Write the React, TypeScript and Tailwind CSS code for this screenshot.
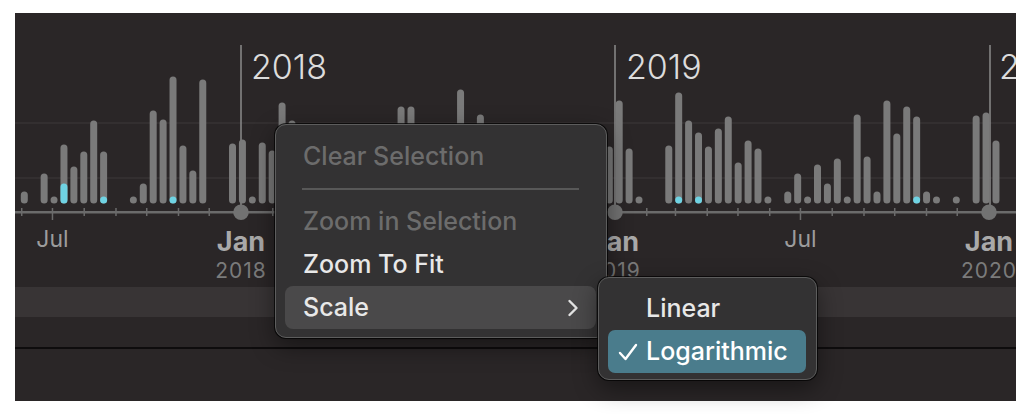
import { ChevronRight } from 'lucide-react'

// px per day on the timeline, Jan 1 2018 sits at x=241
const DAY = 374 / 365
const JAN18 = Date.UTC(2018, 0, 1)
const monthX = (y: number, m: number) => 241 + ((Date.UTC(y, m, 1) - JAN18) / 86400000) * DAY

// [slot, height, cyan] — cyan: 0 none, -1 dot, >0 partial height
const BARS: [number, number, number][] = [
  [0, 12, 0], [2, 30, 0], [3, 7, 0], [4, 59, 20], [5, 37, 0], [6, 52, 0], [7, 83, 0], [8, 52, -1],
  [11, 7, 0], [12, 20, 0], [13, 93, 0], [14, 84, 0], [15, 127, -1], [16, 58, 0], [17, 33, 0], [18, 124, 0],
  [21, 60, 0], [22, 64, 0], [23, 7, 0], [24, 61, 0], [25, 53, 0], [26, 101, 0], [27, 83, 0],
  [28, 40, 0], [29, 62, 0], [30, 7, 0], [31, 25, 0], [32, 70, 0], [33, 48, 0], [34, 55, 0], [35, 30, 0], [36, 7, 0],
  [38, 97, 0], [39, 97, 0], [40, 60, 0], [41, 45, 0], [42, 70, 0], [43, 35, 0], [44, 114, 0], [45, 50, 0],
  [46, 89, 0], [47, 66, 0], [48, 7, 0], [50, 20, 0], [51, 45, 0], [52, 72, 0], [53, 40, 0], [54, 60, 0],
  [55, 7, 0], [56, 52, 0], [57, 30, 0], [58, 70, 0], [59, 57, 0],
  [60, 103, 0], [61, 55, 0], [62, 7, 0], [65, 58, 0], [66, 111, -1], [67, 83, 0], [68, 71, -1], [69, 57, 0],
  [70, 75, 0], [71, 87, 0], [72, 41, 0], [73, 63, 0], [74, 55, 0], [75, 7, 0], [77, 12, 0], [78, 30, 0],
  [79, 7, 0], [80, 39, 0], [81, 20, 0], [82, 45, 0], [83, 7, 0], [84, 89, 0], [85, 47, 0], [86, 12, 0],
  [87, 103, 0], [88, 70, 0], [89, 97, 0], [90, 87, -1], [91, 12, 0], [92, 7, 0], [94, 7, 0],
  [96, 88, 0], [97, 91, 0], [98, 63, 0],
]

const BASE = 203.5
const slotX = (i: number) => 24.3 + i * 9.915

function months() {
  const out: { x: number; major: boolean; jan: boolean }[] = []
  for (let y = 2017; y <= 2020; y++) {
    for (let m = 0; m < 12; m++) {
      const x = monthX(y, m)
      if (x < 10 || x > 1020) continue
      out.push({ x, major: m === 6, jan: m === 0 })
    }
  }
  return out
}

function Chart() {
  const ticks = months()
  return (
    <svg width={1001} height={274} viewBox="15 13 1001 274" className="block">
      <rect x={15} y={122.5} width={1001} height={1} fill="#3d393a" />
      <rect x={15} y={177.5} width={1001} height={1} fill="#3d393a" />

      {[241, 615, 990].map(x => (
        <rect key={x} x={x - 0.75} y={45} width={1.5} height={167} fill="#8a8a8a" />
      ))}

      {BARS.map(([i, h, c]) => {
        const cx = slotX(i)
        return (
          <g key={i}>
            <rect x={cx - 3.5} y={BASE - h} width={7} height={h} rx={3.5} fill="#7a7a7a" />
            {c === -1 && <circle cx={cx} cy={BASE - 3.5} r={3.5} fill="#6fd3e3" />}
            {c > 0 && <rect x={cx - 3.5} y={BASE - c} width={7} height={c} rx={3.5} fill="#6fd3e3" />}
          </g>
        )
      })}

      <rect x={15} y={211} width={1001} height={2.5} fill="#6b6b6b" />
      {ticks.map(t =>
        t.jan
          ? <circle key={t.x} cx={t.x} cy={212.2} r={7.8} fill="#727272" />
          : <rect key={t.x} x={t.x - 0.75} y={208} width={1.5} height={t.major ? 12 : 8} fill="#6b6b6b" />,
      )}
    </svg>
  )
}

const font = { fontFamily: 'Inter, "Noto Sans", sans-serif' }

function JanLabel({ x, year }: { x: number; year: string }) {
  return (
    <div className="absolute w-[80px] text-center leading-none" style={{ left: x - 15 - 40, top: 215 }}>
      <div className="text-[27px] font-bold text-[#a9a9a9]">Jan</div>
      <div className="mt-[5px] text-[21px] text-[#7b7b7b] tracking-[1px]">{year}</div>
    </div>
  )
}

function MenuRow({ label, disabled, active, chevron }: { label: string; disabled?: boolean; active?: boolean; chevron?: boolean }) {
  return (
    <div
      className={`flex h-[43px] items-center justify-between rounded-[8px] pl-[18px] pr-[19px] text-[25px] font-medium ${
        active ? 'bg-[#4a494a]' : ''
      } ${disabled ? 'text-[#6c6c6c]' : 'text-[#e8e8e8]'}`}
    >
      <span>{label}</span>
      {chevron && <ChevronRight size={28} strokeWidth={2.1} className="text-[#e2e2e2] -mr-[10px]" />}
    </div>
  )
}

export default function App() {
  return (
    <div className="relative h-[414px] w-[1032px] overflow-hidden bg-white" style={font}>
      <div className="ml-[15px] mt-[13px] flex h-[388px] w-[1001px] flex-col overflow-hidden bg-[#2a2627]">
        <div className="relative h-[274px] overflow-hidden">
          <Chart />
          {[
            ['2018', 236],
            ['2019', 611],
            ['2020', 984],
          ].map(([t, l]) => (
            <div
              key={t}
              className="absolute text-[34px] font-light leading-none text-[#dcdcdc]"
              style={{ left: Number(l), top: 37 }}
            >
              {t}
            </div>
          ))}
          {/* Jul 2018 sits under the menu, only 2017 and 2019 show */}
          {[52.5, 800.5].map(x => (
            <div
              key={x}
              className="absolute w-[60px] text-center text-[23px] leading-none text-[#9c9c9c]"
              style={{ left: x - 15 - 30, top: 215 }}
            >
              Jul
            </div>
          ))}
          <JanLabel x={241} year="2018" />
          <JanLabel x={615} year="2019" />
          <JanLabel x={989} year="2020" />
        </div>
        <div className="h-[30px] bg-[#383435]" />
        <div className="h-[30px]" />
        <div className="h-[2px] bg-[#0e0c0d]" />
        <div className="flex-1" />
      </div>

      {/* context menu */}
      <div className="absolute left-[275px] top-[124px] h-[214px] w-[332px] rounded-[11px] border border-[#5d5d5d] bg-[#333233] pl-[9px] pr-[10px] pt-[10px] shadow-[0_0_0_1px_rgba(0,0,0,0.7),0_8px_24px_rgba(0,0,0,0.45)]">
        <MenuRow label="Clear Selection" disabled />
        <div className="flex h-[22px] items-center px-[17px]">
          <div className="h-[2px] w-full bg-[#585858]" />
        </div>
        <MenuRow label="Zoom in Selection" disabled />
        <MenuRow label="Zoom To Fit" />
        <MenuRow label="Scale" active chevron />
      </div>

      {/* submenu */}
      <div className="absolute left-[598px] top-[277px] h-[103px] w-[219px] rounded-[11px] border border-[#5d5d5d] bg-[#333233] pl-[9px] pr-[10px] pt-[9px] shadow-[0_0_0_1px_rgba(0,0,0,0.7),0_8px_24px_rgba(0,0,0,0.45)]">
        <div className="flex h-[43px] items-center pl-[38px] text-[25px] font-medium text-[#e8e8e8]">Linear</div>
        <div className="flex h-[43px] items-center rounded-[7px] bg-[#4a7c8c] pl-[10px] text-[25px] font-medium text-white">
          <svg width="20" height="18" viewBox="0 0 20 18" className="mr-[8px] shrink-0">
            <path d="M2 10 L7.5 16 L18 2" fill="none" stroke="#fff" strokeWidth="2.4" strokeLinecap="round" strokeLinejoin="round" />
          </svg>
          <span>Logarithmic</span>
        </div>
      </div>
    </div>
  )
}
